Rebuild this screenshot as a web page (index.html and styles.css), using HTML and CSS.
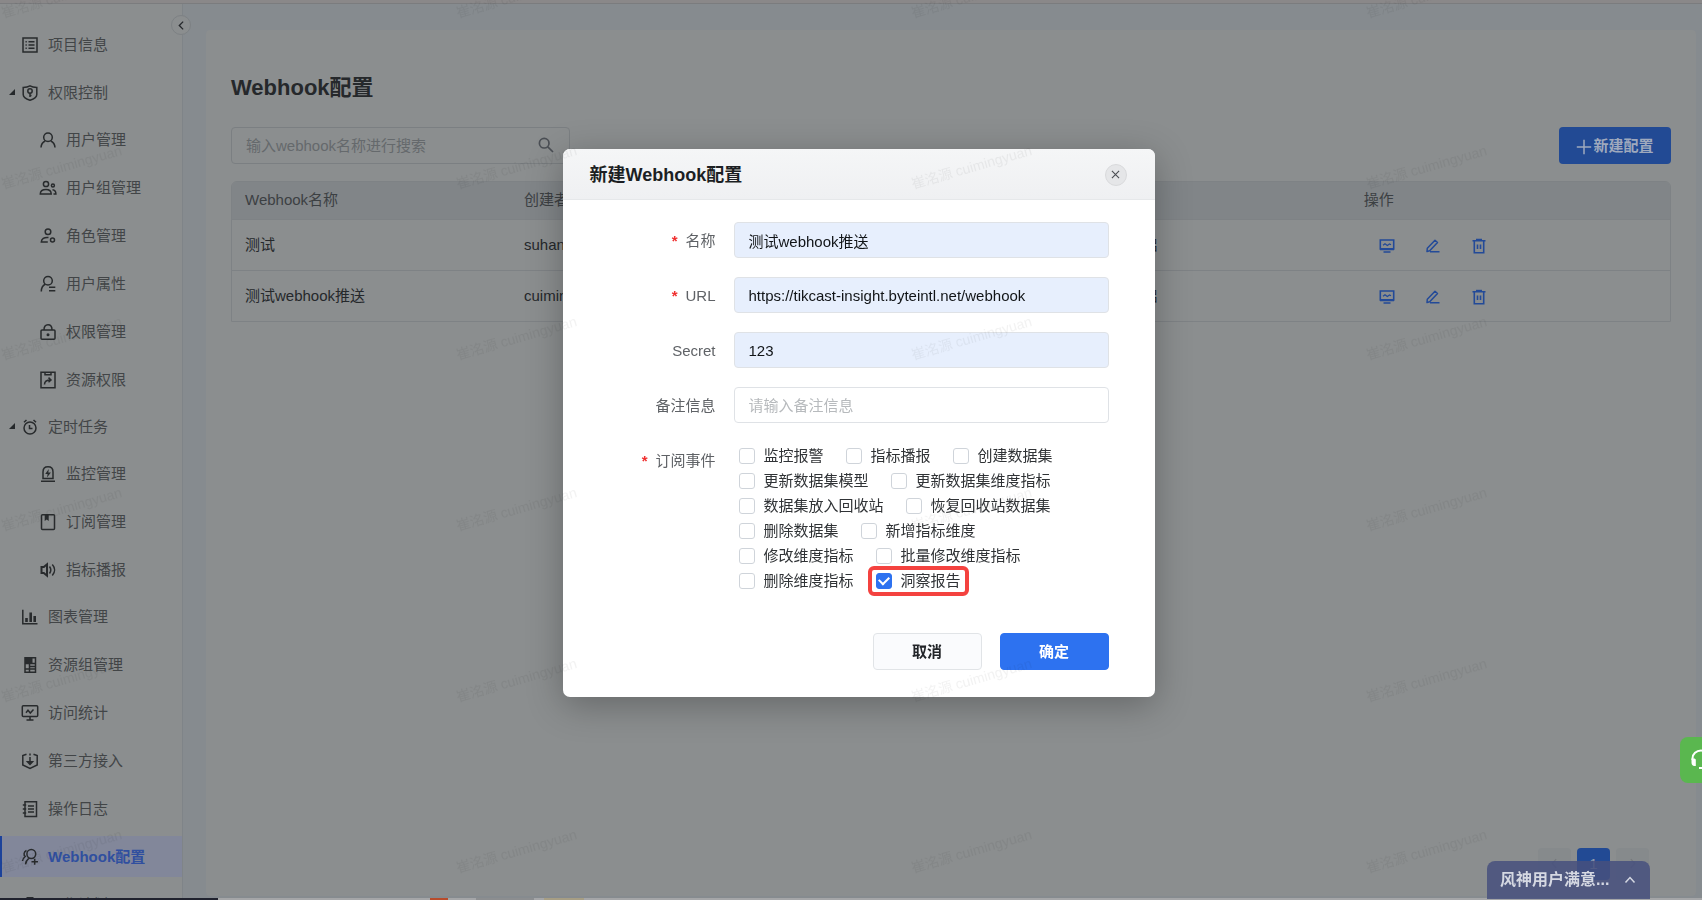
FILE: index.html
```html
<!DOCTYPE html>
<html lang="zh-CN">
<head>
<meta charset="utf-8">
<title>Webhook配置</title>
<link rel="stylesheet" href="styles.css">
</head>
<body>
<svg class="defs" aria-hidden="true">
  <symbol id="i-monitor" viewBox="0 0 16 16"><path fill="none" stroke="currentColor" stroke-width="1.6" d="M1.3 2h13.4v9H1.3z"/><path fill="currentColor" d="M1 10h14v2.200H1zM4.500 13.200h7v1.500h-7z"/><path fill="none" stroke="currentColor" stroke-width="1.300" d="M4 7.300l2-1.500 2.300 1.700L10.500 6l1.500.8"/></symbol>
  <symbol id="i-edit" viewBox="0 0 16 16"><path fill="none" stroke="currentColor" stroke-width="1.500" stroke-linejoin="round" d="M2 13.500l.3-3.300 7.700-8 2.500 2.300-7.800 8.300zM5 13.800h9.500"/></symbol>
  <symbol id="i-trash" viewBox="0 0 16 16"><path fill="none" stroke="currentColor" stroke-width="1.600" d="M1.500 2.800h13M3.300 3v11.700h9.400V3M6.500 6.500V11M9.500 6.500V11"/><path fill="currentColor" d="M5 .8h6V3H5z"/></symbol>
</svg>

<div class="topbar"></div>
<div class="page">
  <nav class="sidebar" aria-label="项目导航">
    <ul class="menu">
      <li><a class="item" href="#"><svg viewBox="0 0 16 16"><path d="M1 1h14v14H1zM3.500 4.700h1.300M3.500 8h1.300M3.500 11.300h1.300M6.500 4.700h6M6.500 8h6M6.500 11.300h6"/></svg>项目信息</a></li>
      <li class="group"><a class="item" href="#"><svg viewBox="0 0 16 16"><path d="M8 .8c2.200 1.200 4.400 1.500 6.800 1.600v7c0 3-3.300 4.700-6.800 5.900C4.500 14.100 1.200 12.400 1.200 9.400v-7C3.600 2.300 5.800 2 8 .8z"/><circle cx="8" cy="6" r="2.200"/><path d="M8 8.200v3.800M8 10.500h1.500"/></svg>权限控制</a>
        <ul class="submenu">
          <li><a class="item" href="#"><svg viewBox="0 0 16 16"><circle cx="8" cy="5.200" r="4.300"/><path d="M1 15.500c.2-3.600 2-5.500 4.200-6.500M15 15.500c-.2-3.600-2-5.500-4.200-6.500"/></svg>用户管理</a></li>
          <li><a class="item" href="#"><svg viewBox="0 0 16 16"><circle cx="6" cy="4" r="2.600"/><path d="M.3 14c0-3 2-4.500 5.700-4.500s5.200 1.500 5.200 4.500z"/><circle cx="12.900" cy="5.500" r="1.500"/><path d="M12.500 9.800c2.200.2 3.400 1.700 3.400 4.200h-2.400"/></svg>用户组管理</a></li>
          <li><a class="item" href="#"><svg viewBox="0 0 16 16"><circle cx="8" cy="3.800" r="2.800"/><path d="M8.500 9.500C4 9 1.500 11 1.300 14h6.500"/><circle cx="12.500" cy="12" r="2"/></svg>角色管理</a></li>
          <li><a class="item" href="#"><svg viewBox="0 0 16 16"><circle cx="8" cy="4.800" r="4.300"/><path d="M1.300 15.500c0-4 1.500-6 4-7.200M9 11.300h6.300M9 14.700h6.300"/></svg>用户属性</a></li>
          <li><a class="item" href="#"><svg viewBox="0 0 16 16"><rect x="1" y="6" width="14" height="9.300" rx="1"/><path d="M4 6C4 2.500 5.500.8 8 .8S12 2.500 12 6"/><circle class="solid" cx="8" cy="10.700" r="1.500"/></svg>权限管理</a></li>
          <li><a class="item" href="#"><svg viewBox="0 0 16 16"><path d="M1 .3h14v15.400H1zM5 .6v2.200h6V.6M4.500 12.500c0-3 2-4.500 6-4.500M8.500 5.600L11 8l-2.500 2.300"/></svg>资源权限</a></li>
        </ul>
      </li>
      <li class="group"><a class="item" href="#"><svg viewBox="0 0 16 16"><circle cx="8" cy="9" r="6"/><path d="M7.500 6v3.500h3M2 3.300L4.500 1M14 3.300L11.500 1"/></svg>定时任务</a>
        <ul class="submenu">
          <li><a class="item" href="#"><svg viewBox="0 0 16 16"><path d="M3 12.500V6c0-3.500 2-5.200 5-5.200S13 2.500 13 6v6.500zM1 15.300h14"/><path class="solid" d="M8.800 3L5.200 8h2.400l-.6 3.500L10.900 6.500H8.300z"/></svg>监控管理</a></li>
          <li><a class="item" href="#"><svg viewBox="0 0 16 16"><rect x="1.500" y=".8" width="13" height="14.600" rx="1"/><path class="solid" d="M4.700 1h4v6L6.700 5.500l-2 1.500z"/></svg>订阅管理</a></li>
          <li><a class="item" href="#"><svg viewBox="0 0 16 16"><path stroke-width="2" d="M1.500 5h2.300L7 2.300v11.400L3.800 11H1.500z"/><path d="M9.500 4.500c1.500 2 1.500 5 0 7M12.300 2.500c3 3.300 3 7.700 0 11"/></svg>指标播报</a></li>
        </ul>
      </li>
      <li><a class="item" href="#"><svg viewBox="0 0 16 16"><path d="M.8.8v14h14.700"/><path stroke-width="2.600" d="M4.500 13V9M8.700 13V3.500M12.700 13V7"/></svg>图表管理</a></li>
      <li><a class="item" href="#"><svg viewBox="0 0 16 16"><path d="M3 .8h10.500v14.500H3z"/><path class="solid" d="M3 1h7.500v5H3z"/><path d="M3 6.500h10M7.500 9.500H13M3 12h10M7.500 6.500v8.500"/></svg>资源组管理</a></li>
      <li><a class="item" href="#"><svg viewBox="0 0 16 16"><rect x=".3" y=".8" width="15.400" height="10.700" rx="1"/><path d="M8 11.500v3M4.500 15h7M4 7.800l2-2.500L8.300 8l3.200-3.500"/></svg>访问统计</a></li>
      <li><a class="item" href="#"><svg viewBox="0 0 16 16"><path d="M4.500 1.200L.8 2.500V12L8 15.500l7.200-3.500V2.500l-3.700-1.300M8 .5v2M8 4v7M5.500 8.800h5L8 11.500z"/></svg>第三方接入</a></li>
      <li><a class="item" href="#"><svg viewBox="0 0 16 16"><path d="M3 .8h11.500v14.600H3zM6 5h6M6 8h6M6 11h6M.8 4h3.400M.8 8h3.400M.8 12h3.400"/></svg>操作日志</a></li>
      <li><a class="item active" href="#" aria-current="page"><svg viewBox="0 0 16 16"><circle cx="9.300" cy="5" r="4.400"/><path d="M3.500 15.300c.3-2.800 1.300-4.500 3.300-6M4.500 1.500C1.500 3 1.500 6 3.200 7.500 1.500 8.800.5 10 .5 12M9.500 12.700h6.500M12.700 9.700v6"/></svg>Webhook配置</a></li>
      <li><a class="item" href="#"><svg viewBox="0 0 16 16"><path d="M1 2.500h14v12H1z"/><path class="solid" d="M4.500 0h7v3h-7z"/></svg>工作计划</a></li>
    </ul>
  </nav>
  <button class="collapse" type="button" aria-label="收起导航"><svg viewBox="0 0 10 10"><path d="M6.500 1.500L3 5l3.500 3.500"/></svg></button>

  <main class="main">
    <section class="panel">
      <h1>Webhook配置</h1>
      <div class="tools">
        <div class="search">
          <input type="search" aria-label="搜索" placeholder="输入webhook名称进行搜索">
          <svg viewBox="0 0 16 16"><circle cx="6.200" cy="6.200" r="4.800"/><path d="M9.800 9.800l5.200 5.200"/></svg>
        </div>
        <button class="create" type="button"><svg viewBox="0 0 16 16"><path d="M8 .8v14.400M.8 8h14.400"/></svg>新建配置</button>
      </div>
      <div class="table-box">
        <table>
          <colgroup><col class="c-name"><col class="c-user"><col class="c-url"><col class="c-state"><col></colgroup>
          <thead><tr><th>Webhook名称</th><th>创建者</th><th></th><th></th><th>操作</th></tr></thead>
          <tbody>
            <tr><td>测试</td><td>suhan</td><td></td><td>开启</td><td><div class="actions"><button type="button" aria-label="监控"><svg><use href="#i-monitor"/></svg></button><button type="button" aria-label="编辑"><svg><use href="#i-edit"/></svg></button><button type="button" aria-label="删除"><svg><use href="#i-trash"/></svg></button></div></td></tr>
            <tr><td>测试webhook推送</td><td>cuimingyuan</td><td></td><td>开启</td><td><div class="actions"><button type="button" aria-label="监控"><svg><use href="#i-monitor"/></svg></button><button type="button" aria-label="编辑"><svg><use href="#i-edit"/></svg></button><button type="button" aria-label="删除"><svg><use href="#i-trash"/></svg></button></div></td></tr>
          </tbody>
        </table>
      </div>
      <div class="pager">
        <button type="button" aria-label="上一页"><svg viewBox="0 0 10 10"><path d="M6.500 1L3 5l3.500 4"/></svg></button>
        <button type="button" class="current">1</button>
        <button type="button" aria-label="下一页"><svg viewBox="0 0 10 10"><path d="M3.500 1L7 5 3.500 9"/></svg></button>
      </div>
    </section>
  </main>
</div>
<div class="dock"><i class="dock-dark"></i><i class="dock-orange"></i><i class="dock-grey"></i><i class="dock-sand"></i></div>

<button class="survey" type="button"><span>风神用户满意...</span><svg viewBox="0 0 12 12"><path d="M1.500 8.500L6 3.500l4.500 5"/></svg></button>
<button class="service" type="button" aria-label="客服"><svg viewBox="0 0 22 22"><path stroke="#fff" stroke-width="2" d="M2.500 11V9.500a8.500 8 0 0 1 17 0V14c0 3-2 5-5 5H9"/><path class="pad" d="M1.500 9.500h2c1.600 0 2.300.5 2.300 1.500v6H4.500c-2 0-3-1.500-3-3.500zM20.500 9.500h-2c-1.600 0-2.300.5-2.300 1.500v6h1.300c2 0 3-1.500 3-3.500z"/></svg></button>

<div class="overlay">
  <form class="modal" role="dialog" aria-labelledby="dlg-title">
    <header class="modal-head">
      <h2 id="dlg-title">新建Webhook配置</h2>
      <button class="close" type="button" aria-label="关闭"><svg viewBox="0 0 10 10"><path d="M1 1l8 8M9 1L1 9"/></svg></button>
    </header>
    <div class="modal-body">
      <div class="field"><label class="required" for="f-name">名称</label><input class="filled" id="f-name" type="text" value="测试webhook推送"></div>
      <div class="field"><label class="required" for="f-url">URL</label><input class="filled" id="f-url" type="text" value="https://tikcast-insight.byteintl.net/webhook"></div>
      <div class="field"><label for="f-secret">Secret</label><input class="filled" id="f-secret" type="text" value="123"></div>
      <div class="field"><label for="f-note">备注信息</label><input id="f-note" type="text" placeholder="请输入备注信息"></div>
      <div class="field events" role="group" aria-labelledby="f-events">
        <span class="label required" id="f-events">订阅事件</span>
        <div class="checks">
          <label><input type="checkbox">监控报警</label>
          <label><input type="checkbox">指标播报</label>
          <label><input type="checkbox">创建数据集</label>
          <label><input type="checkbox">更新数据集模型</label>
          <label><input type="checkbox">更新数据集维度指标</label>
          <label><input type="checkbox">数据集放入回收站</label>
          <label><input type="checkbox">恢复回收站数据集</label>
          <label><input type="checkbox">删除数据集</label>
          <label><input type="checkbox">新增指标维度</label>
          <label><input type="checkbox">修改维度指标</label>
          <label><input type="checkbox">批量修改维度指标</label>
          <label><input type="checkbox">删除维度指标</label>
          <label class="marked"><input type="checkbox" checked>洞察报告</label>
        </div>
      </div>
      <div class="buttons"><button type="button">取消</button><button type="submit" class="primary">确定</button></div>
    </div>
  </form>
</div>

<svg class="watermark" aria-hidden="true">
  <defs><pattern id="wm" width="455" height="171" patternUnits="userSpaceOnUse" y="24">
    <text x="3" y="165" transform="rotate(-16 3 165)">崔洺源 cuimingyuan</text>
  </pattern></defs>
  <rect width="100%" height="100%" fill="url(#wm)"/>
</svg>
</body>
</html>
```

FILE: styles.css
```css
* { box-sizing: border-box; }

body {
  margin: 0;
  height: 100vh;
  overflow: hidden;
  display: flex;
  flex-direction: column;
  background: #868b8f;
  color: #25282b;
  font: 15px/20px "Liberation Sans", "Noto Sans CJK SC", sans-serif;
}

button, input { font: inherit; color: inherit; }
button { padding: 0; border: 0; background: none; cursor: pointer; }
svg { fill: none; stroke: currentColor; }
.defs { position: absolute; width: 0; height: 0; }

.topbar { flex: none; height: 4px; background: #8a8889; border-bottom: 1px solid #7b7c7e; }

.page { flex: 1; min-height: 0; display: flex; position: relative; }

/* Sidebar */
.sidebar {
  flex: none;
  width: 183px;
  overflow: hidden;
  padding-top: 20px;
  background: #8b8e8f;
  border-right: 1px solid #7f8488;
}
.menu, .submenu { margin: 0; padding: 0; list-style: none; display: flex; flex-direction: column; gap: 7px; }
.submenu { margin-top: 6px; }
.group { position: relative; margin-bottom: -1px; }
.group::before {
  content: "";
  position: absolute;
  left: 9px;
  top: 17px;
  border-style: solid;
  border-width: 0 0 6px 6px;
  border-color: transparent transparent #25282b;
}
.item {
  display: flex;
  align-items: center;
  gap: 10px;
  height: 41px;
  padding-left: 22px;
  color: #424547;
  text-decoration: none;
  white-space: nowrap;
}
.submenu .item { padding-left: 40px; }
.item svg { width: 16px; height: 16px; flex: none; stroke: #282b2d; stroke-width: 1.5; overflow: visible; }
.item .solid { fill: #282b2d; stroke: none; }
.item.active {
  background: #82879a;
  box-shadow: inset 2px 0 #1c429a;
  color: #304f9f;
  font-weight: bold;
}
.collapse {
  position: absolute;
  left: 171px;
  top: 11px;
  width: 20px;
  height: 20px;
  display: grid;
  place-items: center;
  border: 1px solid #7d8184;
  border-radius: 50%;
  background: #8b8e8f;
}
.collapse svg { width: 11px; height: 11px; stroke-width: 1.2; }

/* Main panel */
.main { flex: 1; min-width: 0; display: flex; padding: 26px 6px 2px 23px; }
.panel {
  flex: 1;
  min-width: 0;
  display: flex;
  flex-direction: column;
  padding: 42px 25px 16px;
  background: #8b8e8f;
  border-radius: 4px;
}
.panel h1 { margin: 0 0 23px; font-size: 22px; line-height: 32px; }
.tools { display: flex; justify-content: space-between; align-items: center; margin-bottom: 17px; }
.search { position: relative; width: 339px; }
.search input {
  width: 100%;
  height: 37px;
  padding: 0 44px 0 14px;
  border: 1px solid #7b7f82;
  border-radius: 4px;
  background: transparent;
  outline: 0;
}
.search input::placeholder { color: #65696c; opacity: 1; }
.search svg { position: absolute; right: 16px; top: 10px; width: 16px; height: 16px; stroke: #4b4f55; stroke-width: 1.7; }
.create {
  display: flex;
  align-items: center;
  justify-content: center;
  gap: 1px;
  width: 112px;
  height: 37px;
  border-radius: 4px;
  background: #224a94;
  color: #9fa9bd;
  font-weight: bold;
}
.create svg { width: 16px; height: 16px; margin-top: 3px; stroke-width: 1.5; }

.table-box { border: 1px solid #7e8285; border-radius: 6px 6px 0 0; overflow: hidden; }
table { width: 100%; border-collapse: collapse; table-layout: fixed; }
.c-name, .c-user { width: 19.4%; }
.c-url { width: 22.6%; }
.c-state { width: 16.4%; }
th, td { padding: 0 13px; text-align: left; }
th { height: 37px; background: #818588; color: #3c4043; font-weight: normal; }
td { height: 51px; border-top: 1px solid #7e8285; }
.actions { display: flex; gap: 30px; padding-left: 15px; }
.actions button { display: flex; color: #234a98; }
.actions svg { width: 16px; height: 16px; margin-top: 2px; stroke: none; }

.pager { display: flex; justify-content: flex-end; gap: 6px; margin-top: auto; padding-right: 22px; }
.pager button { width: 33px; height: 32px; border-radius: 4px; background: #868a8c; color: #74787b; }
.pager svg { width: 11px; height: 11px; }
.pager .current { background: #224a94; color: #8e9aac; }

/* Strip visible under the window */
.dock { flex: none; height: 2px; display: flex; background: #a5a6a8; }
.dock i { height: 2px; }
.dock-dark { width: 218px; background: #20222e; }
.dock-orange { width: 18px; margin-left: 212px; background: #b84c2c; }
.dock-grey { width: 58px; margin-left: 28px; background: #8c8e90; }
.dock-sand { width: 40px; margin-left: 10px; background: #a79e84; }

/* Floating widgets */
.survey {
  position: fixed;
  right: 52px;
  bottom: 1px;
  width: 163px;
  height: 38px;
  display: flex;
  align-items: center;
  justify-content: space-between;
  padding: 0 14px 0 13px;
  border-radius: 8px 8px 0 0;
  background: rgba(70, 80, 126, 0.85);
  color: #d5d8e2;
  font-size: 16px;
  font-weight: bold;
  white-space: nowrap;
}
.survey svg { width: 12px; height: 12px; stroke-width: 1.5; }
.service {
  position: fixed;
  right: -24px;
  bottom: 117px;
  width: 46px;
  height: 46px;
  padding-left: 10px;
  border-radius: 8px;
  background: #5ab74f;
  text-align: left;
}
.service svg { width: 22px; height: 22px; display: block; }
.service .pad { fill: #fff; stroke: none; }

/* Dialog */
.overlay { position: fixed; inset: 0; display: flex; align-items: flex-start; justify-content: center; padding: 149px 0 0 15px; }
.modal {
  width: 592px;
  border-radius: 7px;
  overflow: hidden;
  background: #fff;
  box-shadow: 0 8px 36px rgba(0, 0, 0, 0.28);
}
.modal-head {
  display: flex;
  align-items: center;
  justify-content: space-between;
  height: 51px;
  padding: 1px 28px 0 27px;
  border-bottom: 1px solid #e6e8ea;
  background: linear-gradient(#f5f6f7, #eff0f2);
}
.modal-head h2 { margin: 0; font-size: 18px; line-height: 24px; color: #1c1f23; }
.close {
  width: 22px;
  height: 22px;
  display: grid;
  place-items: center;
  border: 1px solid #d9dadc;
  border-radius: 50%;
  background: #e5e6e8;
  color: #4a4d52;
}
.close svg { width: 9px; height: 9px; stroke-width: 1.2; }

.modal-body { display: flex; flex-direction: column; gap: 19px; padding: 22px 46px 27px 27px; }
.field { display: grid; grid-template-columns: 126px 1fr; column-gap: 18px; align-items: center; }
.field > label, .label { padding-top: 2px; text-align: right; color: #5f6266; }
.required::before { content: "*"; margin-right: 8px; color: #f03030; font-weight: bold; }
.field > input {
  width: 100%;
  height: 36px;
  padding: 0 14px;
  border: 1px solid #dfe2e6;
  border-radius: 4px;
  background: #fff;
  color: #111417;
  outline: 0;
}
.field > input.filled { background: #e7effd; }
.field > input::placeholder { color: #b7babd; opacity: 1; }

.events { align-items: start; }
.events .label { padding-top: 9px; }
.checks { display: flex; flex-wrap: wrap; column-gap: 22px; padding: 1px 0 0 5px; }
.checks label { display: flex; align-items: center; gap: 9px; height: 25px; color: #303336; position: relative; }
.checks input {
  appearance: none;
  width: 16px;
  height: 16px;
  margin: 0;
  border: 1px solid #cfd4da;
  border-radius: 3px;
  background: #fff;
}
.checks input:checked {
  border-color: #2d72f0;
  background: #2d72f0;
  display: grid;
  place-items: center;
}
.checks input:checked::before {
  content: "";
  width: 8px;
  height: 5px;
  margin-bottom: 2px;
  border: solid #fff;
  border-width: 0 0 2px 2px;
  rotate: -45deg;
}
.marked::after {
  content: "";
  position: absolute;
  inset: -2px -8px -3px;
  border: 4px solid #f4423f;
  border-radius: 6px;
}
.buttons { display: flex; justify-content: flex-end; gap: 18px; margin-top: 21px; }
.buttons button {
  width: 109px;
  height: 37px;
  border: 1px solid #e1e4e7;
  border-radius: 4px;
  background: #fafbfd;
  color: #222529;
  font-weight: bold;
}
.buttons .primary { border-color: #2d72f0; background: #2d72f0; color: #fff; }

.watermark { position: fixed; inset: 0; width: 100%; height: 100%; pointer-events: none; stroke: none; }
.watermark text { font-size: 14px; fill: #000; fill-opacity: 0.05; stroke: none; }
```
